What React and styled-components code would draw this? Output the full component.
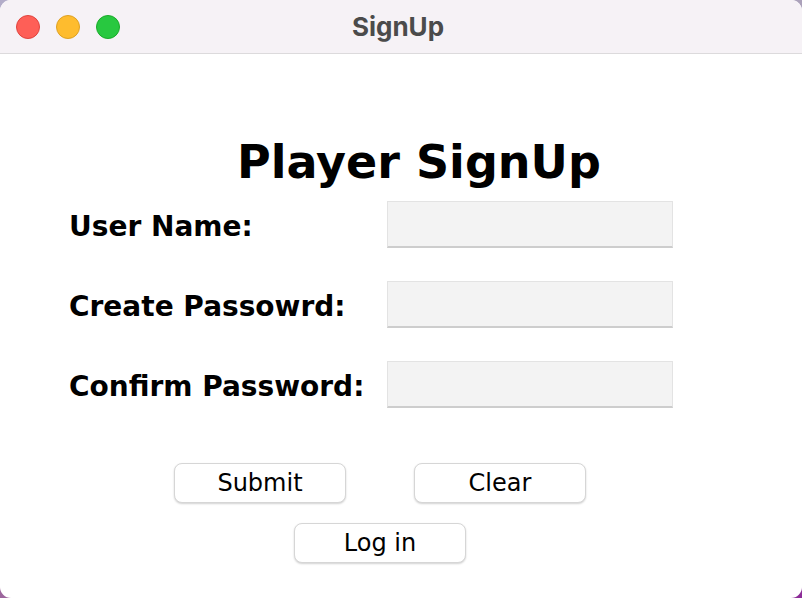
import React from "react";
import styled, { createGlobalStyle } from "styled-components";

const GlobalStyle = createGlobalStyle`
  html, body {
    margin: 0;
    padding: 0;
    width: 802px;
    height: 598px;
    overflow: hidden;
    background: linear-gradient(165deg, #b3adc9 0%, #a699b0 45%, #9a5a98 80%, #8c2c98 100%);
  }
`;

const SignUpWindow = () => {
  return (
    <Wrapper>
      <GlobalStyle />
      <TitleBar>
        <Lights>
          <Light color="#fe5f57" edge="#e0443e" />
          <Light color="#febc2e" edge="#dea123" />
          <Light color="#28c840" edge="#1aab29" />
        </Lights>
        <WindowTitle>SignUp</WindowTitle>
      </TitleBar>

      <Content>
        <Heading>Player SignUp</Heading>

        <Form>
          <Label>User Name:</Label>
          <Field type="text" />
          <Label>Create Passowrd:</Label>
          <Field type="password" />
          <Label>Confirm Password:</Label>
          <Field type="password" />
        </Form>

        <ButtonRow>
          <Button>Submit</Button>
          <Button>Clear</Button>
        </ButtonRow>
        <ButtonRow indent="120px">
          <Button>Log in</Button>
        </ButtonRow>
      </Content>
    </Wrapper>
  );
};

const Wrapper = styled.div`
  width: 802px;
  height: 598px;
  box-sizing: border-box;
  background: #ffffff;
  border-radius: 11px;
  overflow: hidden;
  display: flex;
  flex-direction: column;
`;

const TitleBar = styled.div`
  height: 53px;
  flex-shrink: 0;
  background: #f6f2f6;
  border-bottom: 1px solid #dcdadc;
  display: flex;
  align-items: center;
  position: relative;
`;

const Lights = styled.div`
  display: flex;
  gap: 16px;
  padding-left: 16px;
`;

const Light = styled.span`
  width: 24px;
  height: 24px;
  border-radius: 50%;
  box-sizing: border-box;
  background: ${({ color }) => color};
  border: 1px solid ${({ edge }) => edge};
`;

const WindowTitle = styled.div`
  position: absolute;
  left: 0;
  right: 0;
  text-align: center;
  font-family: Inter, "Noto Sans", sans-serif;
  font-weight: 700;
  font-size: 26px;
  color: #4b4b4b;
  padding-right: 6px;
  pointer-events: none;
`;

const Content = styled.div`
  flex: 1;
  display: flex;
  flex-direction: column;
  font-family: "DejaVu Sans", Verdana, sans-serif;
  color: #000;
`;

const Heading = styled.h1`
  margin: 82px 0 0 0;
  padding-left: 237px;
  font-size: 46px;
  font-weight: 700;
  line-height: 52px;
`;

const Form = styled.div`
  margin-top: 13px;
  padding-left: 69px;
  display: grid;
  grid-template-columns: 318px 286px;
  grid-auto-rows: 47px;
  row-gap: 33px;
  align-items: center;
`;

const Label = styled.div`
  font-size: 28px;
  font-weight: 700;
  white-space: nowrap;
  padding-top: 3px;
`;

const Field = styled.input`
  width: 286px;
  height: 47px;
  box-sizing: border-box;
  margin: 0;
  background: #f3f3f3;
  border: 1px solid #e3e3e3;
  border-bottom: 2px solid #cdcdcd;
  border-radius: 0;
  outline: none;
`;

const ButtonRow = styled.div`
  display: flex;
  gap: 68px;
  padding-left: calc(174px + ${({ indent }) => indent || "0px"});
  margin-top: ${({ indent }) => (indent ? "20px" : "55px")};
`;

const Button = styled.button`
  width: 172px;
  height: 40px;
  box-sizing: border-box;
  background: #ffffff;
  border: 1px solid #d6d6d6;
  border-radius: 8px;
  box-shadow: 0 1px 2px rgba(0, 0, 0, 0.18);
  font-family: "DejaVu Sans", Verdana, sans-serif;
  font-size: 24px;
  color: #000;
  padding: 0;
`;

export default SignUpWindow;
